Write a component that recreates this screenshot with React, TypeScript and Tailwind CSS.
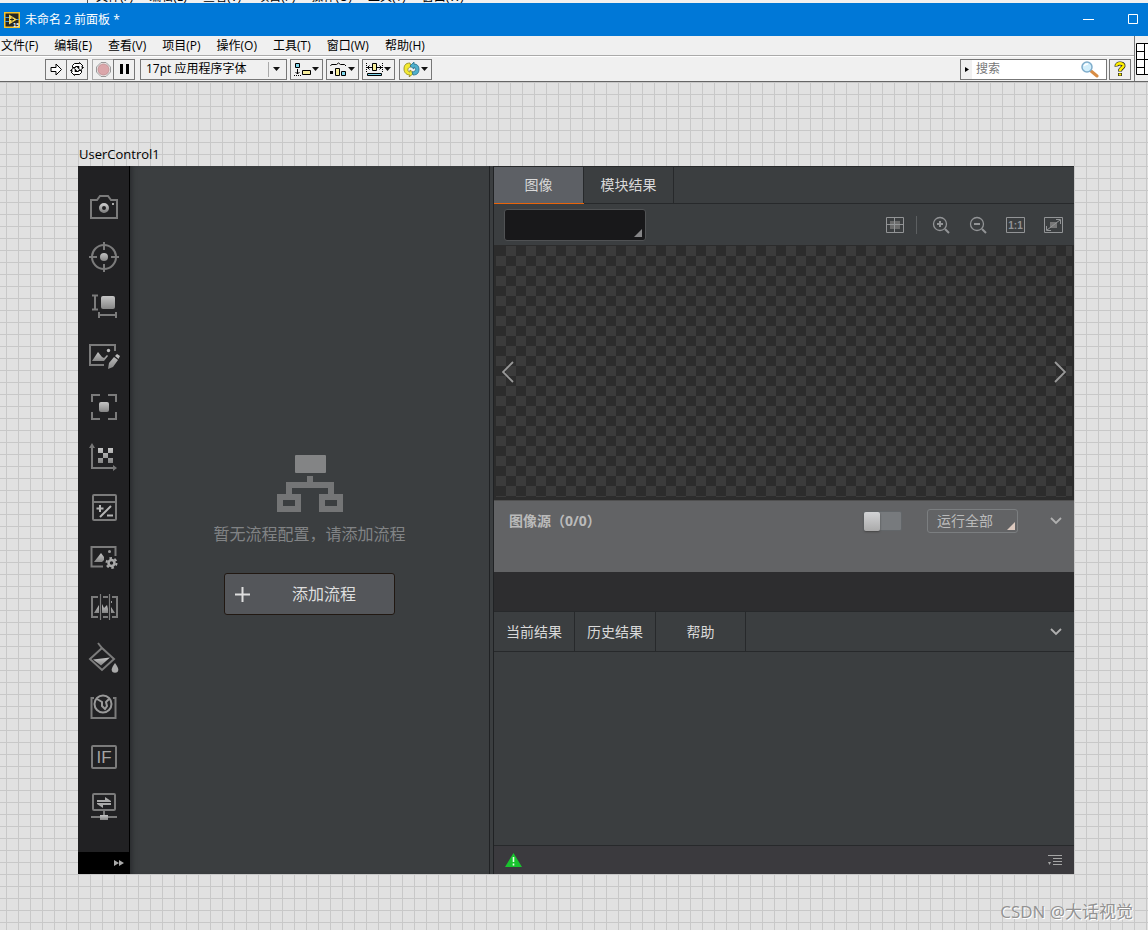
import type { ReactNode } from "react"

const menuItems = ["文件(F)", "编辑(E)", "查看(V)", "项目(P)", "操作(O)", "工具(T)", "窗口(W)", "帮助(H)"]

const toolIcons: { label: string; icon: ReactNode }[] = [
    {
        label: "采集",
        icon: (
            <>
                <path d="M3 9h6l3-4h8l3 4h6v18H3z" />
                <circle cx="16" cy="17" r="3.5" stroke="url(#metal)" strokeWidth="3" />
                <path d="M24 12h2v2h-2z" fill="#aaa" stroke="none" />
            </>
        ),
    },
    {
        label: "定位",
        icon: (
            <>
                <circle cx="16" cy="16" r="12" />
                <path d="M16 1v8M16 23v8M1 16h8M23 16h8" />
                <circle cx="16" cy="16" r="4" fill="url(#metal)" stroke="none" />
            </>
        ),
    },
    {
        label: "测量",
        icon: (
            <>
                <path d="M4 4.5h6M4 18.5h6M7 4.5v14M11 21v6M28 21v6M11 24h17" />
                <rect x="13" y="5" width="14" height="13" rx="2" fill="url(#metal)" stroke="none" />
            </>
        ),
    },
    {
        label: "图像处理",
        icon: (
            <>
                <path d="M16 24H2V4h25v6" />
                <path d="M4 20l6-9 4 5 2 1 3-3 1 1-4 5z" fill="url(#metal)" stroke="none" />
                <circle cx="20.5" cy="9.5" r="1.700" fill="#bbb" stroke="none" />
                <path d="M20 28l1-6 5-6 4 3-5 7zM27 15l2-2 3 2-1.500 3z" fill="url(#metal)" stroke="none" />
            </>
        ),
    },
    {
        label: "识别",
        icon: (
            <>
                <path d="M4 11V4h8M20 4h8v7M28 21v7h-8M12 28H4v-7" />
                <rect x="11" y="11" width="10" height="10" rx="2" fill="url(#metal)" stroke="none" />
            </>
        ),
    },
    {
        label: "标定",
        icon: (
            <>
                <path d="M4 6v21h22" />
                <path d="M1 7l3-5 3 5zM25 24l4 3-4 3z" fill="#777" stroke="none" />
                <path d="M10 7h5v5h-5zM20 7h5v5h-5zM15 12h5v5h-5zM10 17h5v5h-5zM20 17h5v5h-5z" fill="url(#metal)" stroke="none" />
            </>
        ),
    },
    {
        label: "运算",
        icon: (
            <>
                <rect x="5" y="4" width="23" height="25" rx="1" />
                <path d="M5 11h23" />
                <path d="M8.5 17.5h7M12 14v7M12 26l11-11M19 24.5h6" stroke="#b5b5b5" />
            </>
        ),
    },
    {
        label: "图像设置",
        icon: (
            <>
                <path d="M15 25.5H3.5V6h24v9" />
                <path d="M6 21l7-9 3 4v3l-2 2z" fill="url(#metal)" stroke="none" />
                <circle cx="21.5" cy="10.5" r="1.500" fill="#999" stroke="none" />
                <circle cx="23.5" cy="22" r="3" stroke="#aaa" strokeWidth="2.500" />
                <circle cx="23.5" cy="22" r="5" stroke="#aaa" strokeWidth="2" strokeDasharray="2.600 2.600" />
            </>
        ),
    },
    {
        label: "拼接",
        icon: (
            <>
                <path d="M10 6H4v20h6M15 6h5M15 26h5M24 6h5v20h-5" />
                <path d="M12.5 3v26M21.5 3v26" strokeWidth="1.200" />
                <path d="M6 22l5-8v8zM14 22v-9l2 4 3-3 1 4v4zM23 22v-6l4 6z" fill="url(#metal)" stroke="none" />
                <path d="M23 10h1v2h-1z" fill="#999" stroke="none" />
            </>
        ),
    },
    {
        label: "颜色",
        icon: (
            <>
                <path d="M10 2l4 5 12 11-12 11L2 18 14 7" />
                <path d="M5 18.5l17-2-9 8z" fill="url(#metal)" stroke="none" />
                <path d="M27 22c2 3 3.300 5 3.300 6.500a3.300 3.300 0 0 1-6.600 0C23.700 27 25 25 27 22z" fill="#aaa" stroke="none" />
            </>
        ),
    },
    {
        label: "缺陷",
        icon: (
            <>
                <path d="M6 7H3.500v20h24V7H25" />
                <circle cx="15" cy="13" r="8.500" stroke="#999" />
                <path d="M9 8l5 3v4l3 3 2-3-1-4 3-3" stroke="#999" />
            </>
        ),
    },
    {
        label: "逻辑",
        icon: (
            <>
                <rect x="4" y="5" width="24" height="22" rx="1" />
                <text x="16" y="22" textAnchor="middle" fontSize="17" fontFamily="Liberation Sans, sans-serif" fill="#a5a5a5" stroke="none">IF</text>
            </>
        ),
    },
    {
        label: "通信",
        icon: (
            <>
                <rect x="5" y="3" width="22" height="16" rx="1" />
                <path d="M16 19v5M3 26h26" />
                <path d="M9 9h8V6l6 4v1H9zM23 12H9v1l6 4v-3h8z" fill="#aaa" stroke="none" />
                <path d="M12 24h8v5h-8z" fill="url(#metal)" stroke="none" />
            </>
        ),
    },
]

function LabViewLogo() {
    return (
        <svg width="16" height="16" viewBox="0 0 16 16" className="shrink-0">
            <path d="M.75.75h14.500v14.500H.75z" fill="#262626" stroke="#f5c22c" strokeWidth="1.500" />
            <path d="M1 5.500h4M1 9.500h4M11 7.500h4" stroke="#4a9bd4" />
            <path d="M5 2.500l8 5-8 5z" fill="#f8d550" />
            <path d="M6 7.500h4M8 5.500v4" stroke="#222" />
            <text x="9" y="15" fontSize="6" fontWeight="bold" fontFamily="Liberation Sans, sans-serif" fill="#fff">15</text>
        </svg>
    )
}

function MenuButton({ label, children }: { label: string; children: ReactNode }) {
    return (
        <button aria-label={label} className="flex h-[21px] items-center gap-px border border-[#777] bg-[#f0f0f0] px-[3px]">
            {children}
            <svg width="7" height="4" viewBox="0 0 7 4"><path d="M0 0h7L3.500 4z" fill="#111" /></svg>
        </button>
    )
}

function TitleBar() {
    return (
        <header className="flex h-[33px] items-center bg-[#0078d7] pl-1 pr-[9px] text-white">
            <LabViewLogo />
            <h1 className="ml-[5px] flex-1 text-xs">未命名 2 前面板 *</h1>
            <button aria-label="最小化" className="flex w-[45px] justify-center">
                <svg width="11" height="11" viewBox="0 0 11 11"><path d="M0 5.500h11" stroke="#fff" /></svg>
            </button>
            <button aria-label="最大化" className="flex w-[28px] justify-end">
                <svg width="11" height="11" viewBox="0 0 11 11"><path d="M.5.5h9v9h-9z" fill="none" stroke="#fff" /></svg>
            </button>
        </header>
    )
}

function Toolbar() {
    return (
        <div className="flex h-[25px] items-center border-t border-white pl-[45px] pr-[3px]">
            <div className="flex">
                <button aria-label="运行" className="flex h-[21px] w-[22px] items-center justify-center border border-[#777]">
                    <svg width="13" height="13" viewBox="0 0 13 13"><path d="M1 4.500h5V1l5.500 5.500L6 12V8.500H1z" fill="#fff" stroke="#000" /></svg>
                </button>
                <button aria-label="连续运行" className="-ml-px flex h-[21px] w-[22px] items-center justify-center border border-[#777]">
                    <svg width="16" height="14" viewBox="0 0 16 14" fill="#fff" stroke="#000">
                        <path d="M3.500 5.500V3.500l2-2h5v-1l3.500 3.500h-1v1.500h1.500L11.500 8 8.500 5.500H10v-1H6.500v1z" />
                        <path d="M12.500 8.500v2l-2 2h-5v1L2 10h1V8.500H1.500L4.500 6l3 2.500H6v1h3.500v-1z" />
                    </svg>
                </button>
            </div>
            <div className="ml-1 flex">
                <button aria-label="中止执行" className="flex h-[21px] w-[22px] items-center justify-center border border-[#aaa]">
                    <svg width="15" height="15" viewBox="0 0 15 15">
                        <path d="M5 .5h5L14.500 5v5L10 14.500H5L.5 10V5z" fill="#eee" stroke="#999" />
                        <circle cx="7.5" cy="7.5" r="5.500" fill="#dba6aa" stroke="#c39296" />
                    </svg>
                </button>
                <button aria-label="暂停" className="-ml-px flex h-[21px] w-[22px] items-center justify-center border border-[#777]">
                    <svg width="9" height="10" viewBox="0 0 9 10"><path d="M0 0h3v10H0zM6 0h3v10H6z" /></svg>
                </button>
            </div>
            <div className="relative ml-[5px] flex">
                <select aria-label="字体" className="h-[21px] w-[147px] appearance-none border border-[#777] bg-[#f0f0f0] pl-[5px] text-xs text-black">
                    <option>17pt 应用程序字体</option>
                </select>
                <span className="pointer-events-none absolute inset-y-0 right-0 my-[3px] flex w-[19px] items-center border-l border-[#aaa] pl-1">
                    <svg width="7" height="4" viewBox="0 0 7 4"><path d="M0 0h7L3.500 4z" fill="#111" /></svg>
                </span>
            </div>
            <div className="ml-[3px] flex gap-[3px]">
                <MenuButton label="对齐对象">
                    <svg width="17" height="15" viewBox="0 0 17 15">
                        <path d="M1.500 1.500h4v4h-4z" fill="#7fd8ee" stroke="#000" />
                        <path d="M8.500 8.500h8v4h-8z" fill="#f7ee9b" stroke="#000" />
                        <path d="M3.500 7v5M1.500 10l2 2 2-2" fill="none" stroke="#000" />
                        <path d="M0 13.500h8" stroke="#000" strokeDasharray="1 1" />
                    </svg>
                </MenuButton>
                <MenuButton label="分布对象">
                    <svg width="17" height="15" viewBox="0 0 17 15">
                        <path d="M.5 4l1-1.500h5l2-1.500 2 1.500h4l1.500 1.500" fill="none" stroke="#000" />
                        <path d="M0 9h3v3H0z" />
                        <path d="M5.500 6.500h4v7h-4z" fill="#f7ee9b" stroke="#000" />
                        <path d="M11.500 9.500h4v4h-4z" fill="#7fd8ee" stroke="#000" />
                    </svg>
                </MenuButton>
                <MenuButton label="调整对象大小">
                    <svg width="17" height="15" viewBox="0 0 17 15">
                        <path d="M1.500 11.500h14v2h-14z" fill="#7fd8ee" stroke="#000" />
                        <path d="M6.500 1.500h4v7h-4z" fill="#f7ee9b" stroke="#000" />
                        <path d="M1 5.500h5M11 5.500h5M3.500 3.500l-2 2 2 2M13.500 3.500l2 2-2 2" fill="none" stroke="#000" />
                        <path d="M.5 1v9M16.500 1v9" stroke="#000" strokeDasharray="1 1" />
                    </svg>
                </MenuButton>
            </div>
            <div className="ml-1 flex">
                <MenuButton label="重新排序">
                    <svg width="17" height="15" viewBox="0 0 17 15">
                        <path d="M7 1C2 1 1 4 1 7c0 4 3 6 6 6l-1 2 5-4-4-3v2C4 10 4 5 8 5z" fill="#f3ea33" stroke="#8b8420" strokeWidth=".8" />
                        <path d="M10 13c5 0 6-3 6-6 0-3-2-5-5-5V0L7 4l4 3V5c3 1 2 5-2 5z" fill="#4fb0cc" stroke="#276f8b" strokeWidth=".8" />
                    </svg>
                </MenuButton>
            </div>
            <form className="ml-auto flex h-[21px] items-center border border-[#777] bg-white pr-[7px]">
                <span className="flex h-full w-[11px] items-center justify-center bg-[#f0f0f0]">
                    <svg width="4" height="5" viewBox="0 0 4 5"><path d="M0 0l4 2.500L0 5z" /></svg>
                </span>
                <input aria-label="搜索" placeholder="搜索" className="w-[108px] bg-white pl-1 text-xs outline-none placeholder:text-[#777]" />
                <svg width="19" height="17" viewBox="0 0 19 17">
                    <path d="M11 10l6 5" stroke="#d98d44" strokeWidth="3" strokeLinecap="round" />
                    <circle cx="7" cy="6" r="5" fill="#d2effc" stroke="#7fadcb" strokeWidth="1.500" />
                    <path d="M4 5c1-2 2-2 4-2" stroke="#fff" strokeWidth="1.500" fill="none" />
                </svg>
            </form>
            <button aria-label="帮助" className="ml-[2px] flex h-[21px] w-[22px] items-center justify-center border border-[#777]">
                <svg width="12" height="16" viewBox="0 0 12 16" fill="none">
                    <path d="M2.500 5.500C2 1.500 10 1.500 9.500 5 9 7 6 7 6 10.500M6 12v3" stroke="#222" strokeWidth="4" />
                    <path d="M2.500 5C2 1.500 10 1.500 9.500 5 9 7 6 7 6 10M6 12.500v2" stroke="#ffef00" strokeWidth="2.600" />
                </svg>
            </button>
        </div>
    )
}

function Sidebar() {
    return (
        <nav className="flex flex-col border-r border-black bg-[#212123]">
            <div className="flex flex-1 flex-col pt-4">
                {toolIcons.map(({ label, icon }) => (
                    <button key={label} aria-label={label} className="flex h-[50px] items-center justify-center">
                        <svg width="32" height="32" viewBox="0 0 32 32" fill="none" stroke="#7b7b7b" strokeWidth="2" overflow="visible">
                            {icon}
                        </svg>
                    </button>
                ))}
            </div>
            <button aria-label="展开" className="flex h-[22px] items-center justify-end bg-black pr-[5px]">
                <svg width="10" height="6" viewBox="0 0 10 6"><path d="M0 0l5 3-5 3zM5 0l5 3-5 3z" fill="#aaa" /></svg>
            </button>
        </nav>
    )
}

function FlowPanel() {
    return (
        <section className="flex flex-col items-center justify-center bg-[#3b3e40] pt-[30px] shadow-[inset_5px_0_5px_-3px_#292b2d]">
            <svg width="68" height="58" viewBox="0 0 68 58">
                <rect x="19" y="0" width="31" height="18" rx="1" fill="#838485" />
                <path d="M34 21v9M13 40V30h42v10" fill="none" stroke="#747576" strokeWidth="6" />
                <path d="M4 42h18v12H4zM46 42h18v12H46z" fill="none" stroke="#747576" strokeWidth="6" />
            </svg>
            <p className="mt-[9px] text-base leading-6 text-[#818385]">暂无流程配置，请添加流程</p>
            <button className="mt-[27px] flex h-[42px] w-[171px] items-center rounded-[3px] border border-[#211812] bg-[#54565a] pl-[10px] text-base text-[#dedede]">
                <svg width="15" height="15" viewBox="0 0 15 15"><path d="M0 7.500h15M7.500 0v15" stroke="#dedede" strokeWidth="2" /></svg>
                <span className="ml-[42px]">添加流程</span>
            </button>
        </section>
    )
}

function ViewTools() {
    return (
        <div className="flex items-center gap-[19px] text-[#929496]">
            <div className="flex items-center gap-3">
                <button aria-label="网格">
                    <svg width="18" height="16" viewBox="0 0 18 16" fill="none" stroke="currentColor">
                        <path d="M4 4h10v8H4z" fill="#6b6b6b" stroke="none" />
                        <path d="M.5.5h17v15H.5zM8.500 0v16M0 7.500h18" />
                    </svg>
                </button>
                <span className="h-[18px] w-px bg-[#5c5f61]" />
            </div>
            <button aria-label="放大" className="-ml-1">
                <svg width="18" height="18" viewBox="0 0 18 18" fill="none" stroke="currentColor">
                    <circle cx="8" cy="8" r="6.500" strokeWidth="1.300" />
                    <path d="M5 8h6M8 5v6M13 13l4 4" strokeWidth="2" />
                </svg>
            </button>
            <button aria-label="缩小">
                <svg width="18" height="18" viewBox="0 0 18 18" fill="none" stroke="currentColor">
                    <circle cx="8" cy="8" r="6.500" strokeWidth="1.300" />
                    <path d="M5 8h6M13 13l4 4" strokeWidth="2" />
                </svg>
            </button>
            <button aria-label="原始大小">
                <svg width="19" height="16" viewBox="0 0 19 16">
                    <path d="M.5.5h18v15H.5z" fill="none" stroke="currentColor" />
                    <text x="9.5" y="12" textAnchor="middle" fontSize="10" fontWeight="bold" fontFamily="Liberation Sans, sans-serif" fill="currentColor">1:1</text>
                </svg>
            </button>
            <button aria-label="适应窗口">
                <svg width="19" height="16" viewBox="0 0 19 16" fill="none" stroke="currentColor">
                    <path d="M6 5h7v6H6z" fill="#777" stroke="none" />
                    <path d="M.5.5h18v15H.5zM3 13L16 3M12 2.500h4.500V7M7 13.500H2.500V9" />
                </svg>
            </button>
        </div>
    )
}

function Chevron() {
    return (
        <svg width="12" height="8" viewBox="0 0 12 8"><path d="M1 1l5 5 5-5" fill="none" stroke="#b0b0b0" strokeWidth="1.800" /></svg>
    )
}

function ResultPanel() {
    return (
        <section className="flex min-w-0 flex-col bg-[#3b3e40] text-sm text-[#d9d9d9]">
            <div className="flex h-[38px] border-y border-[#27292b]">
                <button className="w-[90px] border-r border-[#27292b] bg-[#5d6065] shadow-[0_1px_0_#e9640a]">图像</button>
                <button className="w-[90px] border-r border-[#27292b]">模块结果</button>
            </div>
            <div className="flex h-[41px] items-center justify-between pl-[10px] pr-[11px]">
                <div className="relative flex">
                    <select aria-label="图像选择" className="h-8 w-[142px] appearance-none rounded-[3px] border border-[#505254] bg-[#18181a]">
                        <option></option>
                    </select>
                    <svg width="8" height="8" viewBox="0 0 8 8" className="pointer-events-none absolute bottom-1 right-1"><path d="M8 0v8H0z" fill="#858587" /></svg>
                </div>
                <ViewTools />
            </div>
            <div className="flex flex-[251] items-center justify-between border-2 border-t border-b-[3px] border-[#2c2c2c] bg-[repeating-conic-gradient(#3b3b3b_0_25%,#2c2c2c_0_50%)] bg-[length:20px_20px] px-[6px]">
                <button aria-label="上一张">
                    <svg width="12" height="22" viewBox="0 0 12 22"><path d="M11 1L1 11l10 10" fill="none" stroke="#999" strokeWidth="1.800" /></svg>
                </button>
                <button aria-label="下一张">
                    <svg width="12" height="22" viewBox="0 0 12 22"><path d="M1 1l10 10L1 21" fill="none" stroke="#999" strokeWidth="1.800" /></svg>
                </button>
            </div>
            <div className="flex h-[72px] items-start border-t border-[#505050] bg-[#626365] pl-[15px] pr-3 text-[#bababa]">
                <h2 className="flex-1 font-bold leading-10">图像源（0/0）</h2>
                <div className="flex h-10 items-center">
                    <label className="flex">
                        <span className="sr-only">启用图像源</span>
                        <input type="checkbox" className="h-5 w-[39px] appearance-none rounded-xs border border-[#626669] bg-[#777a7d] before:block before:h-[19px] before:w-4 before:rounded-xs before:bg-linear-to-b before:from-[#d2d3d5] before:to-[#aaa] before:shadow-[0_1px_2px_#444]" />
                    </label>
                    <div className="relative ml-[25px] flex">
                        <select aria-label="运行" className="h-6 w-[91px] appearance-none rounded-[3px] border border-[#7b7e80] bg-transparent pl-[9px] text-sm">
                            <option>运行全部</option>
                        </select>
                        <svg width="8" height="8" viewBox="0 0 8 8" className="pointer-events-none absolute bottom-[3px] right-[3px]"><path d="M8 0v8H0z" fill="#dcc9bf" /></svg>
                    </div>
                    <button aria-label="折叠图像源" className="ml-8"><Chevron /></button>
                </div>
            </div>
            <div className="h-[39px] bg-[#2d2d2f]" />
            <div className="flex h-[41px] items-stretch border-y border-[#27292b] pr-3">
                <button className="w-[81px] border-r border-[#27292b]">当前结果</button>
                <button className="w-[81px] border-r border-[#27292b]">历史结果</button>
                <button className="w-[90px] border-r border-[#27292b]">帮助</button>
                <button aria-label="折叠结果" className="ml-auto"><Chevron /></button>
            </div>
            <div className="flex-[193]" />
            <footer className="flex h-[29px] items-center justify-between border-t border-[#27292b] bg-[#3b3a3e] pl-[11px] pr-3">
                <svg width="17" height="14" viewBox="0 0 17 14">
                    <path d="M8.500 0L17 14H0z" fill="#19c32e" />
                    <path d="M8.500 4v5M8.500 10.500v2" stroke="#e8ffe8" strokeWidth="1.600" />
                </svg>
                <button aria-label="日志">
                    <svg width="14" height="12" viewBox="0 0 14 12" stroke="#a5a5a5"><path d="M0 1.500h14M5 4.500h9M5 7.500h9M5 10.500h9" /><path d="M0 8h3l-1.500 3z" fill="#a5a5a5" stroke="none" /></svg>
                </button>
            </footer>
        </section>
    )
}

export default function App() {
    return (
        <div className="flex min-h-screen flex-col bg-[#f0f0f0] font-['Open_Sans','Noto_Sans_CJK_SC',sans-serif] text-black">
            <svg width="0" height="0" className="absolute">
                <linearGradient id="metal" x1="0" y1="0" x2="0" y2="1">
                    <stop offset="0" stopColor="#c5c5c5" />
                    <stop offset="1" stopColor="#858585" />
                </linearGradient>
            </svg>

            {/* Menu of the window behind */}
            <div aria-hidden="true" className="flex h-[3px] items-end gap-4 overflow-hidden pl-[87px] text-xs leading-3">
                <span className="-mr-2 h-[3px] w-px bg-[#555]" />
                {menuItems.slice(0, 7).map((item) => <span key={item}>{item}</span>)}
            </div>
            <TitleBar />
            <div className="flex border-b border-[#666]">
                <div className="min-w-0 flex-1 border-r border-[#777]">
                    <nav className="flex h-5 items-center gap-4 border-b border-[#aaa] pl-px text-xs leading-4">
                        {menuItems.map((item) => <button key={item} className="shrink-0">{item}</button>)}
                    </nav>
                    <Toolbar />
                </div>
                <div className="flex w-[13px] items-center overflow-hidden pl-px">
                    <svg width="12" height="32" viewBox="0 0 12 32" className="shrink-0">
                        <path d="M.5.5H14v31H.5zM8.500 0v32M0 8.500h8M0 16.500h14M0 24.500h8" fill="#fff" stroke="#000" />
                    </svg>
                </div>
            </div>

            <main className="flex flex-1 flex-col bg-[#e1e1e1] bg-[linear-gradient(to_right,#c8c8c8_1px,transparent_1px),linear-gradient(#c8c8c8_1px,transparent_1px)] bg-[length:12px_12px] bg-[position:6px_0] pl-[78px] pr-[74px] pt-[62px]">
                <h2 className="h-[22px] pl-px text-[13px] leading-5">UserControl1</h2>
                <div className="grid flex-1 grid-cols-[52px_359fr_5px_580fr]">
                    <Sidebar />
                    <FlowPanel />
                    <div className="border-x border-[#202224] bg-[#3b3e40]" />
                    <ResultPanel />
                </div>
                <div className="flex h-14 items-center justify-end pt-5">
                    <p className="-mr-[59px] text-[17px] text-[#929292] [text-shadow:1px_1px_0_#fff]">CSDN @大话视觉</p>
                </div>
            </main>
        </div>
    )
}
